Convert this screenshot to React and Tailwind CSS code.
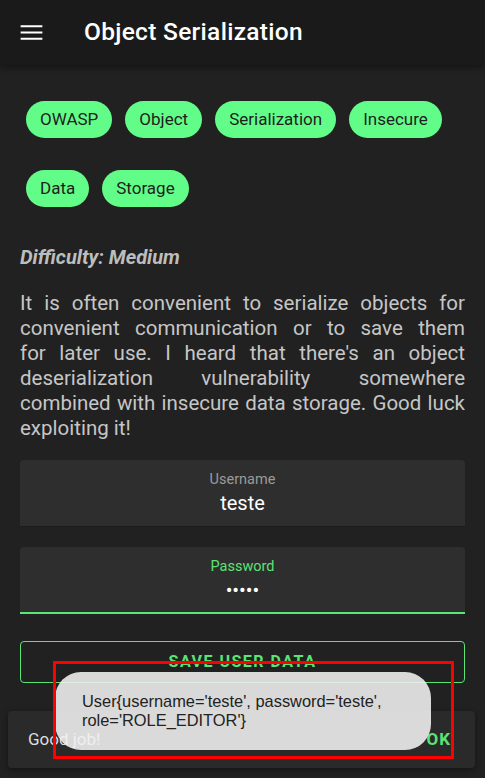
const tags = ["OWASP", "Object", "Serialization", "Insecure", "Data", "Storage"];

const lines = [
  "It is often convenient to serialize objects for",
  "convenient communication or to save them",
  "for later use. I heard that there's an object",
  "deserialization vulnerability somewhere",
  "combined with insecure data storage. Good luck",
];

function Field({ label, value, active }) {
  return (
    <div
      className={
        "h-[67px] rounded-t-[4px] bg-[#2e2e2e] flex flex-col items-center pt-[10px] " +
        (active ? "border-b-2 border-[#5be375]" : "border-b border-[#1c1c1c]")
      }
    >
      <span className={"text-[14.5px] leading-[19px] " + (active ? "text-[#5be375]" : "text-[#9a9a9a]")}>
        {label}
      </span>
      <span className="text-[20px] leading-[28px] text-white">{value}</span>
    </div>
  );
}

export default function App() {
  return (
    <div className="relative w-[485px] h-[778px] overflow-hidden bg-[#212121] font-['Roboto',sans-serif]">
      <header className="h-[65px] bg-[#1a1a1a] flex items-center shadow-[0_3px_6px_rgba(0,0,0,0.35)]">
        <div className="w-[84px] pl-[17px]">
          <svg width="29" height="29" viewBox="0 0 24 24" fill="#ffffff">
            <path d="M3 18h18v-1.6H3V18zm0-5.2h18v-1.6H3v1.6zM3 6v1.6h18V6H3z" />
          </svg>
        </div>
        <h1 className="text-[24.5px] font-medium text-white tracking-[0.3px]">Object Serialization</h1>
      </header>

      <main className="px-[20px]">
        <div className="flex flex-wrap gap-x-[13px] gap-y-[32px] pt-[36px] px-[6px]">
          {tags.map((t) => (
            <span
              key={t}
              className="h-[37px] px-[14px] rounded-full bg-[#62fd88] text-[#1e1e1e] text-[17px] flex items-center"
            >
              {t}
            </span>
          ))}
        </div>

        <p className="mt-[37px] text-[20px] font-bold italic text-[#bdbdbd] leading-[26px]">Difficulty: Medium</p>

        <p className="mt-[21px] text-[20.5px] leading-[25px] text-[#c6c6c6]">
          {lines.map((l) => (
            <span key={l} className="block whitespace-nowrap text-justify [text-align-last:justify]">
              {l}
            </span>
          ))}
          <span className="block">exploiting it!</span>
        </p>

        <div className="mt-[19px] flex flex-col gap-[20px]">
          <Field label="Username" value="teste" />
          <Field label="Password" value="•••••" active />
        </div>

        <button className="mt-[27px] w-full h-[42px] rounded-[4px] border border-[#5be375] text-[#5be375] text-[16px] font-bold tracking-[1.5px]">
          SAVE USER DATA
        </button>
      </main>

      {/* snackbar */}
      <div className="absolute left-[8px] right-[10px] top-[711px] h-[57px] rounded-[4px] bg-[#2a2a2a] shadow-[0_2px_6px_rgba(0,0,0,0.4)] flex items-center justify-between pl-[20px] pr-[24px]">
        <span className="text-[17px] text-[#dedede]">Good job!</span>
        <span className="text-[17px] font-bold tracking-[1px] text-[#5be375]">OK</span>
      </div>

      {/* toast */}
      <div className="absolute left-[55px] top-[672px] w-[376px] h-[78px] rounded-[26px] bg-[rgba(240,240,240,0.89)] pl-[27px] pt-[20px] text-[16.4px] leading-[19px] text-[#222] font-['Liberation_Sans',sans-serif]">
        User{"{"}username='teste', password='teste',
        <br />
        role='ROLE_EDITOR'{"}"}
      </div>

      <div className="absolute left-[53px] top-[661px] w-[401px] h-[98px] border-[3px] border-[#ff0000]" />
    </div>
  );
}
